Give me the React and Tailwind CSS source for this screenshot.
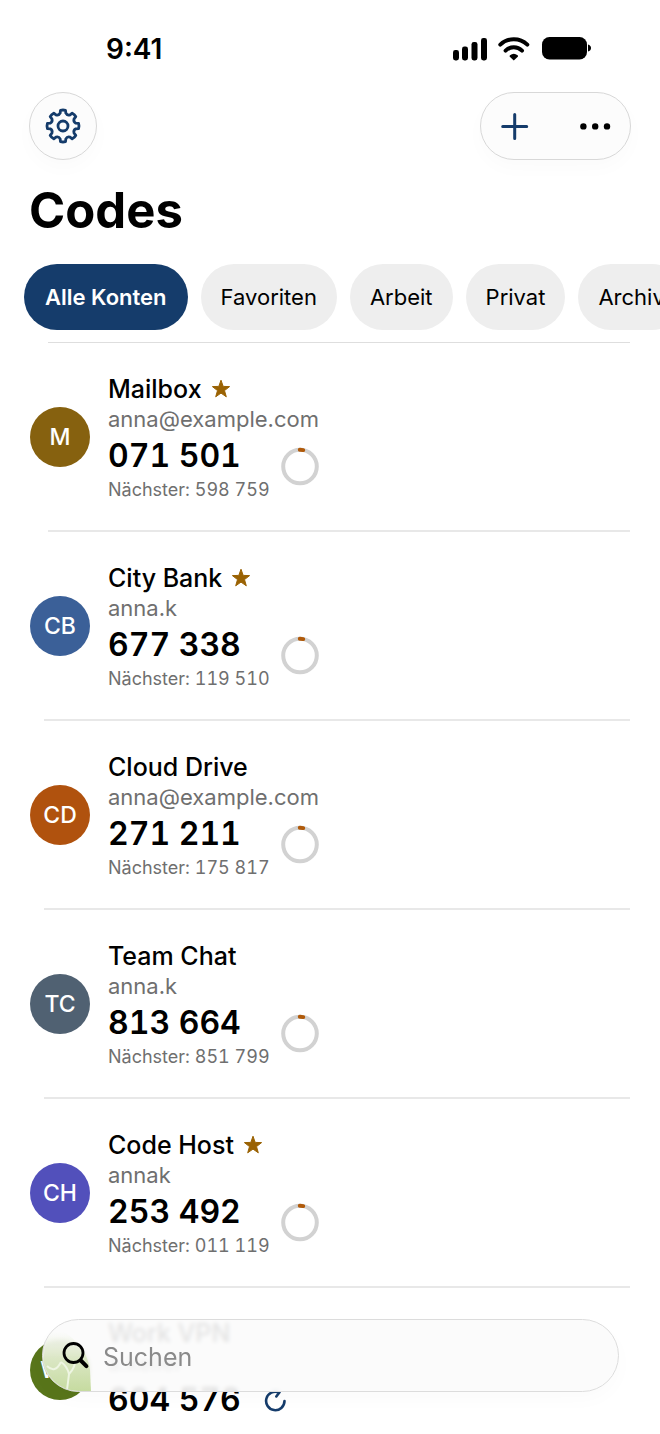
import React, { useState } from 'react';

const filters = ['Alle Konten', 'Favoriten', 'Arbeit', 'Privat', 'Archiv'];

const accounts = [
  { initials: 'M', name: 'Mailbox', user: 'anna@example.com', code: '071 501', next: '598 759', favorite: true, color: 'bg-[#86610f]', line: 'ml-12' },
  { initials: 'CB', name: 'City Bank', user: 'anna.k', code: '677 338', next: '119 510', favorite: true, color: 'bg-[#3b6098]', line: 'ml-11' },
  { initials: 'CD', name: 'Cloud Drive', user: 'anna@example.com', code: '271 211', next: '175 817', favorite: false, color: 'bg-[#b0520e]', line: 'ml-11' },
  { initials: 'TC', name: 'Team Chat', user: 'anna.k', code: '813 664', next: '851 799', favorite: false, color: 'bg-[#506172]', line: 'ml-11' },
  { initials: 'CH', name: 'Code Host', user: 'annak', code: '253 492', next: '011 119', favorite: true, color: 'bg-[#5250bb]', line: 'ml-11' },
];

function gearPath(teeth, outer, inner) {
  const step = (Math.PI * 2) / teeth;
  const point = (r, a) => `${(20 + r * Math.sin(a)).toFixed(2)} ${(20 - r * Math.cos(a)).toFixed(2)}`;
  let d = '';
  for (let i = 0; i < teeth; i++) {
    const a = i * step;
    d += `${i === 0 ? 'M' : 'L'}${point(outer, a - 0.16)} Q${point(outer + 0.6, a)} ${point(outer, a + 0.16)} `;
    d += `L${point(inner + 0.9, a + 0.22)} Q${point(inner - 1.2, a + step / 2)} ${point(inner + 0.9, a + step - 0.22)} `;
  }
  return d + 'Z';
}

function GearIcon() {
  return (
    <svg viewBox="0 0 40 40" className="h-10 w-10" fill="none" stroke="currentColor" strokeWidth="2.8" strokeLinejoin="round">
      <path d={gearPath(8, 15.8, 12.2)} />
      <circle cx="20" cy="20" r="5" />
    </svg>
  );
}

function StatusIcons() {
  return (
    <svg viewBox="0 0 140 26" className="h-[26px] w-[140px]" fill="currentColor" aria-hidden="true">
      <rect x="1" y="14" width="6" height="10.5" rx="2.4" />
      <rect x="10" y="10.5" width="6" height="14" rx="2.4" />
      <rect x="19.5" y="6" width="6" height="18.5" rx="2.4" />
      <rect x="29" y="2" width="6" height="22.5" rx="2.4" />
      <g fill="none" stroke="currentColor" strokeWidth="4" strokeLinecap="round">
        <path d="M48.3 8.6a19.6 19.6 0 0 1 27 0" />
        <path d="M53.6 14.6a11.8 11.8 0 0 1 16.4 0" />
      </g>
      <path d="M61.8 24.5l-4-3.7q-.6-.8.2-1.5a5.8 5.8 0 0 1 7.6 0q.8.7.2 1.500z" />
      <rect x="90" y="1" width="45" height="22.5" rx="7.5" />
      <path d="M136 8.6q3 1 3 3.5t-3 3.5z" />
    </svg>
  );
}

function Star() {
  return (
    <svg viewBox="0 0 20 20" className="h-5 w-5 text-[#9a6203]" fill="currentColor" stroke="currentColor" strokeLinejoin="round" role="img" aria-label="Favorit">
      <path d="M10 1.2l2.2 6.2 6.400.2-5.100 4 1.800 6.200-5.300-3.700-5.300 3.700 1.800-6.200L1.400 7.600l6.400-.2z" />
    </svg>
  );
}

function Ring() {
  return (
    <svg viewBox="0 0 40 40" className="h-10 w-10" fill="none" strokeWidth="4" aria-hidden="true">
      <circle cx="20" cy="19.5" r="16.8" stroke="#d2d2d2" />
      <path d="M19.8 2.800A16.800 16.800 0 0 1 23.200 3.100" stroke="#b05a0a" strokeLinecap="round" />
    </svg>
  );
}

function Avatar({ initials, color }) {
  return (
    <div className={`flex h-[60px] w-[60px] shrink-0 items-center justify-center rounded-full text-[23px] font-medium text-white ${color}`}>
      {initials}
    </div>
  );
}

function Account({ account }) {
  return (
    <li>
      <div className="flex items-center gap-[18px] px-[30px] pt-[30px] pb-[29px]">
        <Avatar initials={account.initials} color={account.color} />
        <div>
          <div className="flex items-center gap-[9px] text-[25px] leading-[32px] font-medium">
            {account.name}
            {account.favorite && <Star />}
          </div>
          <div className="text-[22px] leading-[28px] text-[#6f6f6f]">{account.user}</div>
          <div className="flex items-center gap-3">
            <div className="w-40 tabular-nums">
              <div className="text-[32px] leading-[46px] font-semibold whitespace-nowrap">{account.code}</div>
              <div className="text-[18px] leading-[22px] whitespace-nowrap text-[#6f6f6f]">Nächster: {account.next}</div>
            </div>
            <Ring />
          </div>
        </div>
      </div>
      <div className={`mr-[30px] h-[2px] bg-[#e8e8e8] ${account.line}`} />
    </li>
  );
}

// light bending of the avatar behind the left end of the search bar
function GlassTint() {
  return (
    <svg viewBox="0 0 60 71" className="pointer-events-none absolute top-0 left-0 h-[71px] w-[60px]" fill="none" aria-hidden="true">
      <defs>
        <linearGradient id="tint" x1="0" y1="0" x2="0" y2="1">
          <stop offset="0" stopColor="#eef3e4" stopOpacity="0" />
          <stop offset="0.45" stopColor="#dbe7c5" />
          <stop offset="1" stopColor="#c6dba0" />
        </linearGradient>
      </defs>
      <path d="M4 14Q14 8 24 14Q44 28 47 50L48 71H20Q2 66 0 42Z" fill="url(#tint)" />
      <path d="M4 46q8 8 14-4M18 42q6 4 8 12l-2 16M26 54q6-6 6-13" stroke="#eef5e2" strokeWidth="2" />
    </svg>
  );
}

export default function App() {
  const [active, setActive] = useState('Alle Konten');
  const [query, setQuery] = useState('');

  return (
    <div className="relative flex h-screen flex-col overflow-hidden bg-white font-['Inter',sans-serif] text-black">
      <div className="flex h-[92px] shrink-0 items-center justify-between pt-[6px] pr-[68px] pl-[106px]">
        <span className="text-[28px] leading-[32px] font-semibold">9:41</span>
        <StatusIcons />
      </div>

      <header className="shrink-0 px-[29px]">
        <div className="flex items-center justify-between">
          <button aria-label="Einstellungen" className="flex h-[68px] w-[68px] items-center justify-center rounded-full border border-[#d8d8d8] bg-[#fcfcfc] text-[#153c6b] shadow-[0_8px_20px_rgba(0,0,0,0.02)]">
            <GearIcon />
          </button>
          <div className="flex h-[68px] w-[151px] items-center justify-between rounded-full border border-[#d8d8d8] bg-[#fcfcfc] px-[18px] shadow-[0_8px_20px_rgba(0,0,0,0.02)]">
            <button aria-label="Konto hinzufügen" className="text-[#153c6b]">
              <svg viewBox="0 0 32 32" className="h-8 w-8" fill="none" stroke="currentColor" strokeWidth="3" strokeLinecap="round">
                <path d="M15.7 4.5v24M3.7 16.5h24" />
              </svg>
            </button>
            <button aria-label="Mehr">
              <svg viewBox="0 0 32 32" className="h-8 w-8" fill="currentColor">
                <circle cx="3.4" cy="16.4" r="3.2" />
                <circle cx="15.2" cy="16.4" r="3.2" />
                <circle cx="27" cy="16.4" r="3.2" />
              </svg>
            </button>
          </div>
        </div>
        <h1 className="pt-5 text-[49px] leading-[62px] font-bold">Codes</h1>
      </header>

      <nav className="flex shrink-0 gap-[13px] overflow-hidden pt-[22px] pb-3 pl-6">
        {filters.map(f => (
          <button
            key={f}
            onClick={() => setActive(f)}
            className={`h-[66px] shrink-0 rounded-full text-[22px] ${f === active ? 'bg-[#153c6b] px-[21px] font-semibold text-white' : 'bg-[#eeeeee] px-5'}`}
          >
            {f}
          </button>
        ))}
      </nav>

      <div className="mr-[30px] ml-12 h-px shrink-0 bg-[#dedede]" />
      <ul className="min-h-0 flex-1 overflow-hidden">
        {accounts.map(a => <Account key={a.name} account={a} />)}
        <li className="flex items-center gap-[18px] px-[30px] py-[29px]">
          <Avatar initials="WV" color="bg-[#58751a]" />
          <div>
            <div className="text-[25px] leading-[32px] font-medium">Work VPN</div>
            <div className="text-[22px] leading-[28px] text-[#6f6f6f]">a.keller</div>
            <div className="flex items-center gap-[22px] text-[32px] leading-[46px] font-semibold whitespace-nowrap tabular-nums">
              604 576
              <button aria-label="Neuer Code" className="text-[#153c6b]">
                <svg viewBox="0 0 24 24" className="h-6 w-6" fill="none" stroke="currentColor" strokeWidth="2.6" strokeLinecap="round" strokeLinejoin="round">
                  <path d="M21.5 13a9.200 9.200 0 1 1-5.600-8.500" />
                  <path d="M11.500 3.200l5 1-3.200 4.300" />
                </svg>
              </button>
            </div>
          </div>
        </li>
      </ul>

      <label className="absolute right-[41px] bottom-[42px] left-[42px] flex h-[73px] items-center gap-3 overflow-hidden rounded-full border border-[#dcdcdc] bg-[#fbfbfb]/90 px-[18px] shadow-[0_8px_20px_rgba(0,0,0,0.02)] backdrop-blur-[2px]">
        <GlassTint />
        <svg viewBox="0 0 30 30" className="relative h-[30px] w-[30px] shrink-0" fill="none" stroke="currentColor" strokeLinecap="round">
          <circle cx="12.5" cy="12" r="9.500" strokeWidth="2.8" />
          <path d="M19.8 19.5l5.600 5.600" strokeWidth="4" />
        </svg>
        <input
          type="search"
          value={query}
          onChange={e => setQuery(e.target.value)}
          placeholder="Suchen"
          aria-label="Suchen"
          className="h-full min-w-0 flex-1 bg-transparent pt-[2px] text-[25px] outline-none placeholder:text-[#8a8a8a]"
        />
      </label>
    </div>
  );
}
